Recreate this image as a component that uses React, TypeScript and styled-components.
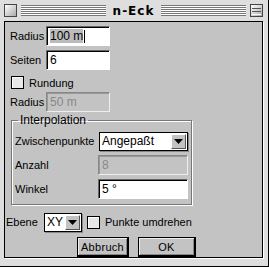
import React from 'react'
import styled, { createGlobalStyle } from 'styled-components'

const GlobalStyle = createGlobalStyle`
  html, body { margin: 0; padding: 0; background: #fff; }
  body {
    font-family: "Liberation Sans", Arial, sans-serif;
    font-size: 11px;
    color: #000;
  }
`

const Window = styled.div`
  width: 269px;
  height: 267px;
  box-sizing: border-box;
  background: #dedede;
  border-right: 1px solid #000;
  border-bottom: 1px solid #000;
  display: flex;
  flex-direction: column;
`

const TitleBar = styled.div`
  height: 21px;
  display: flex;
  align-items: center;
  gap: 4px;
  padding: 0 5px 0 4px;
  box-sizing: border-box;
`

const Box = styled.div`
  width: 11px;
  height: 11px;
  border: 1px solid #444;
  background: linear-gradient(135deg, #fff 0%, #aaa 100%);
  flex: none;
  position: relative;
`

const CollapseBar = styled.div<{ $top: number }>`
  position: absolute;
  left: 1px;
  right: 1px;
  top: ${(p) => p.$top}px;
  height: 2px;
  border-top: 1px solid #555;
  border-bottom: 1px solid #fff;
`

const Stripes = styled.div`
  flex: 1;
  height: 11px;
  background: repeating-linear-gradient(
    to bottom,
    #777 0px,
    #777 1px,
    #fff 1px,
    #fff 2px
  );
`

const Title = styled.div`
  font-family: "DejaVu Sans", sans-serif;
  font-weight: bold;
  font-size: 12px;
  letter-spacing: 1px;
  padding: 0 3px;
`

const Frame = styled.div`
  flex: 1;
  padding: 0 5px 8px 4px;
  display: flex;
`

const Content = styled.div`
  flex: 1;
  border: 1px solid #000;
  box-shadow: 1px 1px 0 #fff;
  background: #c3c3c3;
  display: flex;
  flex-direction: column;
  padding-top: 4px;
`

const Row = styled.div<{ $indent?: number; $gap?: number; $h?: number }>`
  display: flex;
  align-items: center;
  height: ${(p) => p.$h ?? 20}px;
  padding-left: ${(p) => p.$indent ?? 5}px;
  margin-bottom: ${(p) => p.$gap ?? 4}px;
`

const Label = styled.span<{ $w?: number }>`
  width: ${(p) => (p.$w ? `${p.$w}px` : 'auto')};
  flex: none;
  white-space: nowrap;
`

const Field = styled.div<{ $w: number; $off?: boolean }>`
  width: ${(p) => p.$w}px;
  height: 20px;
  box-sizing: border-box;
  border: 1px solid;
  border-color: ${(p) => (p.$off ? '#888 #eee #eee #888' : '#666 #fff #fff #666')};
  box-shadow: ${(p) => (p.$off ? 'inset 1px 1px 0 #999' : 'inset 1px 1px 0 #000')};
  background: ${(p) => (p.$off ? '#c3c3c3' : '#fff')};
  color: ${(p) => (p.$off ? '#888' : '#000')};
  display: flex;
  align-items: center;
  padding-left: 3px;
  font-size: 12px;
`

const Selected = styled.span`
  background: #bbb;
`

const Caret = styled.span`
  display: inline-block;
  width: 1px;
  height: 13px;
  background: #000;
  margin-left: 1px;
`

const Check = styled.span<{ $gapLeft?: number }>`
  width: 11px;
  height: 11px;
  border: 1px solid #000;
  background: #e8e8e8;
  box-shadow: inset 1px 1px 0 #fff;
  flex: none;
  margin-left: ${(p) => p.$gapLeft ?? 0}px;
  margin-right: 5px;
`

const Group = styled.fieldset`
  margin: -3px 0 7px 6px;
  width: 181px;
  box-sizing: border-box;
  border: 1px solid #777;
  box-shadow: 1px 1px 0 #fff, inset 1px 1px 0 #fff;
  padding: 4px 3px 1px 3px;
  min-inline-size: 0;
`

const Legend = styled.legend`
  padding: 0 2px;
  margin-left: 3px;
  font-size: 12px;
`

const GroupRow = styled.div`
  display: flex;
  align-items: center;
  justify-content: space-between;
  height: 20px;
  margin-bottom: 4px;
`

const Popup = styled.div<{ $w: number }>`
  width: ${(p) => p.$w}px;
  height: 19px;
  box-sizing: border-box;
  border: 1px solid #000;
  box-shadow: 1px 1px 0 #888;
  background: #fff;
  display: flex;
  align-items: center;
  padding-left: 2px;
  font-size: 12px;
`

const PopupText = styled.span`
  flex: 1;
`

const Arrow = styled.span`
  width: 15px;
  height: 15px;
  margin-right: 1px;
  box-sizing: border-box;
  border: 1px solid;
  border-color: #fff #555 #555 #fff;
  background: #c3c3c3;
  display: flex;
  align-items: center;
  justify-content: center;
`

const ButtonRow = styled.div`
  display: flex;
  gap: 9px;
  padding-left: 72px;
  margin-top: 1px;
`

const Button = styled.div<{ $w: number }>`
  width: ${(p) => p.$w}px;
  height: 20px;
  box-sizing: border-box;
  border: 1px solid #000;
  border-right-width: 2px;
  border-bottom-width: 2px;
  box-shadow: inset 1px 1px 0 #eee, inset -1px -1px 0 #888;
  background: #c3c3c3;
  display: flex;
  align-items: center;
  justify-content: center;
  font-size: 11px;
  letter-spacing: 0.3px;
`

const ArrowIcon = () => (
  <svg width="9" height="5" viewBox="0 0 9 5">
    <path d="M0 0h9L4.5 5z" fill="#000" />
  </svg>
)

export default function App() {
  return (
    <>
      <GlobalStyle />
      <Window>
        <TitleBar>
          <Box />
          <Stripes />
          <Title>n-Eck</Title>
          <Stripes />
          <Box>
            <CollapseBar $top={3} />
            <CollapseBar $top={6} />
          </Box>
        </TitleBar>
        <Frame>
          <Content>
            <Row>
              <Label $w={36}>Radius</Label>
              <Field $w={64}>
                <Selected>100 m</Selected>
                <Caret />
              </Field>
            </Row>
            <Row>
              <Label $w={36}>Seiten</Label>
              <Field $w={64}>6</Field>
            </Row>
            <Row $indent={6} $gap={1} $h={17}>
              <Check />
              <Label>Rundung</Label>
            </Row>
            <Row>
              <Label $w={36}>Radius</Label>
              <Field $w={64} $off>
                50 m
              </Field>
            </Row>
            <Group>
              <Legend>Interpolation</Legend>
              <GroupRow>
                <Label>Zwischenpunkte</Label>
                <Popup $w={89}>
                  <PopupText>Angepaßt</PopupText>
                  <Arrow>
                    <ArrowIcon />
                  </Arrow>
                </Popup>
              </GroupRow>
              <GroupRow>
                <Label>Anzahl</Label>
                <Field $w={90} $off>
                  8
                </Field>
              </GroupRow>
              <GroupRow>
                <Label>Winkel</Label>
                <Field $w={90}>5 °</Field>
              </GroupRow>
            </Group>
            <Row $indent={1} $gap={4}>
              <Label $w={38}>Ebene</Label>
              <Popup $w={38}>
                <PopupText>XY</PopupText>
                <Arrow>
                  <ArrowIcon />
                </Arrow>
              </Popup>
              <Check $gapLeft={5} />
              <Label>Punkte umdrehen</Label>
            </Row>
            <ButtonRow>
              <Button $w={52}>Abbruch</Button>
              <Button $w={58}>OK</Button>
            </ButtonRow>
          </Content>
        </Frame>
      </Window>
    </>
  )
}
